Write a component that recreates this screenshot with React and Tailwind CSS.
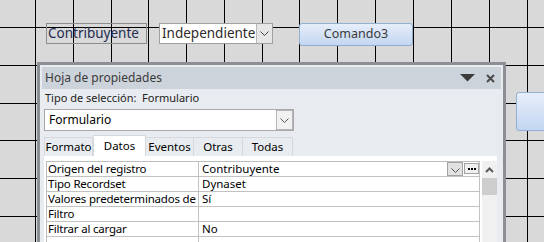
import { ChevronDown } from 'lucide-react'

const gridX = [35, 73, 111, 148, 186, 224, 262, 299, 337, 375, 413, 451, 489, 527]
const gridY = [27, 65, 103, 140, 178, 216]

const tabs = ['Formato', 'Datos', 'Eventos', 'Otras', 'Todas']
const tabWidths = ['w-[49px]', 'w-[53px]', 'w-[48px]', 'w-[49px]', 'w-[50px]']

const rows = [
  { name: 'Origen del registro', value: 'Contribuyente', combo: true },
  { name: 'Tipo Recordset', value: 'Dynaset' },
  { name: 'Valores predeterminados de datos', value: 'Sí' },
  { name: 'Filtro', value: '' },
  { name: 'Filtrar al cargar', value: 'No' },
  { name: '', value: '' },
]

const DesignGrid = () => (
  <svg className="absolute inset-0" width="544" height="242">
    {gridX.map((x) => (
      <line key={'x' + x} x1={x + 0.5} x2={x + 0.5} y1="0" y2="242" stroke="#000" strokeWidth="1" />
    ))}
    {gridY.map((y) => (
      <line key={'y' + y} x1="0" x2="544" y1={y + 0.5} y2={y + 0.5} stroke="#000" strokeWidth="1" />
    ))}
  </svg>
)

const SmallChevron = ({ color = '#555' }) => (
  <svg width="9" height="5" viewBox="0 0 9 5">
    <path d="M0.5 0.5L4.5 4.5L8.5 0.5" fill="none" stroke={color} strokeWidth="1" />
  </svg>
)

const PropertySheet = () => {
  return (
    <div className="absolute left-[37px] top-[62px] w-[469px] h-[190px] border-[3px] border-[#8c8f93] bg-[#e8ebef] p-[1px] pt-[2px]">
      {/* Title bar */}
      <div className="h-[22px] ml-[1px] mr-[1px] bg-[#cdd3da] flex items-center pl-[3px] pr-[6px]">
        <span className="text-[12px] text-[#3a3a3a] flex-1">Hoja de propiedades</span>
        <svg width="15" height="8" viewBox="0 0 15 8" className="mr-[11px]">
          <polygon points="0,0 15,0 7.5,7.5" fill="#3c3c3c" />
        </svg>
        <svg width="9" height="9" viewBox="0 0 9 9">
          <path d="M1 1L8 8M8 1L1 8" stroke="#4a4a4a" strokeWidth="2" />
        </svg>
      </div>

      <div className="pl-[4px] h-[18px] text-[11px] text-[#222] whitespace-pre leading-[18px]">
        Tipo de selección:  Formulario
      </div>

      {/* Object selector */}
      <div className="ml-[3px] mt-[2px] w-[250px] h-[22px] bg-white border border-[#a9a9a9] flex items-center">
        <span className="flex-1 pl-[4px] text-[12px] text-black">Formulario</span>
        <div className="w-[17px] h-[20px] border border-[#b5b5b5] bg-[#f2f2f2] flex items-center justify-center">
          <SmallChevron />
        </div>
      </div>

      {/* Tabs */}
      <div className="flex items-end ml-[3px] mt-[4px] h-[21px]">
        {tabs.map((t, i) =>
          t === 'Datos' ? (
            <div
              key={t}
              className={`${tabWidths[i]} h-[21px] bg-white border border-b-0 border-[#d5d9de] flex justify-center pt-[1px] text-[11.5px] text-black`}
            >
              {t}
            </div>
          ) : (
            <div
              key={t}
              className={`${tabWidths[i]} h-[19px] bg-[#e8ebef] border border-b-0 border-l-0 first:border-l border-[#d5d9de] flex items-center justify-center text-[11.5px] text-black`}
            >
              {t}
            </div>
          )
        )}
      </div>

      {/* Property grid */}
      <div className="ml-[3px] mr-[5px] h-[100px] bg-white pl-[2px] pt-[5px] flex">
        <div className="w-[434px] border-l border-t border-[#bdbdbd]">
          {rows.map((r, i) => (
            <div key={i} className="h-[15px] flex border-b border-[#c2c2c2] text-[11.5px] leading-[14px] text-black">
              <div className="w-[152px] pl-[1px] border-r border-[#c2c2c2] overflow-hidden whitespace-nowrap tracking-[-0.2px]">
                {r.name}
              </div>
              <div className="flex-1 pl-[3px] flex items-start border-r border-[#c2c2c2]">
                <span className="flex-1">{r.value}</span>
                {r.combo && (
                  <>
                    <div className="w-[16px] h-[14px] bg-[#e1e1e1] border border-[#a3a3a3] flex items-end justify-center pb-[2px]">
                      <SmallChevron />
                    </div>
                    <div className="w-[15px] h-[11px] mt-[1px] ml-[1px] bg-[#f0f0f0] border border-[#a3a3a3] flex items-center justify-center gap-[1px]">
                      <div className="w-[2px] h-[2px] bg-black" />
                      <div className="w-[2px] h-[2px] bg-black" />
                      <div className="w-[2px] h-[2px] bg-black" />
                    </div>
                  </>
                )}
              </div>
            </div>
          ))}
        </div>
        <div className="w-[15px] ml-[2px] bg-[#f0f0f0] flex flex-col items-center">
          <svg width="9" height="6" viewBox="0 0 9 6" className="mt-[6px]">
            <path d="M1 5L4.5 1.5L8 5" fill="none" stroke="#5a5a5a" strokeWidth="2" />
          </svg>
          <div className="w-[15px] h-[17px] mt-[5px] bg-[#cdcdcd]" />
        </div>
      </div>
    </div>
  )
}

const App = () => {
  return (
    <div className="relative w-[544px] h-[242px] overflow-hidden bg-[#d9d9d9] font-['Noto_Sans',sans-serif]">
      <DesignGrid />

      {/* Form controls */}
      <div className="relative flex items-start pt-[23px] pl-[46px]">
        <div className="w-[101px] h-[21px] border border-[#8c8c8c] text-[13.5px] leading-[19px] text-[#1f2b52] pl-[1px]">
          Contribuyente
        </div>
        <div className="ml-[12px] w-[114px] h-[21px] border border-[#a0a0a0] bg-white flex items-center">
          <span className="flex-1 pl-[2px] text-[13.5px] leading-[19px] text-[#2e2a28]">Independiente</span>
          <div className="w-[16px] h-[19px] bg-[#e6e6e6] border-l border-[#b8b8b8] flex items-center justify-center">
            <SmallChevron color="#444" />
          </div>
        </div>
        <div className="ml-[26px] w-[114px] h-[23px] rounded-[3px] border border-[#93afd6] bg-gradient-to-b from-[#e6eefa] to-[#c3d6f1] flex items-center justify-center text-[12.5px] text-[#3a3a3a]">
          Comando3
        </div>
      </div>

      {/* Partly visible button at the right edge */}
      <div className="absolute left-[516px] top-[92px] w-[40px] h-[39px] rounded-[3px] border border-[#93afd6] bg-gradient-to-b from-[#e6eefa] to-[#c3d6f1]" />

      <PropertySheet />
    </div>
  )
}

export default App
